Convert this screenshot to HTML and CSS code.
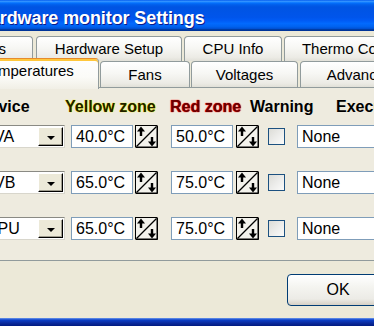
FILE: index.html
```html
<!DOCTYPE html>
<html>
<head>
<meta charset="utf-8">
<link rel="stylesheet" href="styles.css">
</head>
<body>
<div class="window">
  <div class="titlebar"><span class="title">Hardware monitor Settings</span></div>
  <div class="client">
    <div class="tabrow tabrow-top">
      <div class="tab tab-a">Options</div>
      <div class="tab tab-b">Hardware Setup</div>
      <div class="tab tab-c">CPU Info</div>
      <div class="tab tab-d">Thermo Control</div>
    </div>
    <div class="tabrow tabrow-bottom">
      <div class="tab tab-sel tab-e">Temperatures</div>
      <div class="tab tab-f">Fans</div>
      <div class="tab tab-g">Voltages</div>
      <div class="tab tab-h">Advanced</div>
    </div>
    <div class="panel">
      <div class="head">
        <span class="h-device">Device</span>
        <span class="h-yellow">Yellow zone</span>
        <span class="h-red">Red zone</span>
        <span class="h-warn">Warning</span>
        <span class="h-exec">Execute</span>
      </div>
      <div class="rows">
        <div class="row">
          <div class="combo"><span class="combo-text">VA</span><span class="combo-btn"><i class="tri"></i></span></div>
          <div class="field t1">40.0°C</div>
          <svg class="spin" width="23" height="23" viewBox="0 0 23 23"><rect x="0.5" y="0.5" width="21.5" height="21.5" fill="#F3F2EC" stroke="#000"/><path d="M22.5 1 V22.5 H1" fill="none" stroke="#000"/><line x1="1.5" y1="21.5" x2="21.5" y2="1.5" stroke="#000" stroke-width="1.2"/><path d="M6 1.5 L2 6.5 H10 Z"/><rect x="4.8" y="6" width="2.4" height="5"/><rect x="15.8" y="12" width="2.4" height="5"/><path d="M17 21.5 L13 16.5 H21 Z"/></svg>
          <div class="field t2">50.0°C</div>
          <svg class="spin s2" width="23" height="23" viewBox="0 0 23 23"><rect x="0.5" y="0.5" width="21.5" height="21.5" fill="#F3F2EC" stroke="#000"/><path d="M22.5 1 V22.5 H1" fill="none" stroke="#000"/><line x1="1.5" y1="21.5" x2="21.5" y2="1.5" stroke="#000" stroke-width="1.2"/><path d="M6 1.5 L2 6.5 H10 Z"/><rect x="4.8" y="6" width="2.4" height="5"/><rect x="15.8" y="12" width="2.4" height="5"/><path d="M17 21.5 L13 16.5 H21 Z"/></svg>
          <div class="check"></div>
          <div class="field none">None</div>
        </div>
        <div class="row">
          <div class="combo"><span class="combo-text">VB</span><span class="combo-btn"><i class="tri"></i></span></div>
          <div class="field t1">65.0°C</div>
          <svg class="spin" width="23" height="23" viewBox="0 0 23 23"><rect x="0.5" y="0.5" width="21.5" height="21.5" fill="#F3F2EC" stroke="#000"/><path d="M22.5 1 V22.5 H1" fill="none" stroke="#000"/><line x1="1.5" y1="21.5" x2="21.5" y2="1.5" stroke="#000" stroke-width="1.2"/><path d="M6 1.5 L2 6.5 H10 Z"/><rect x="4.8" y="6" width="2.4" height="5"/><rect x="15.8" y="12" width="2.4" height="5"/><path d="M17 21.5 L13 16.5 H21 Z"/></svg>
          <div class="field t2">75.0°C</div>
          <svg class="spin s2" width="23" height="23" viewBox="0 0 23 23"><rect x="0.5" y="0.5" width="21.5" height="21.5" fill="#F3F2EC" stroke="#000"/><path d="M22.5 1 V22.5 H1" fill="none" stroke="#000"/><line x1="1.5" y1="21.5" x2="21.5" y2="1.5" stroke="#000" stroke-width="1.2"/><path d="M6 1.5 L2 6.5 H10 Z"/><rect x="4.8" y="6" width="2.4" height="5"/><rect x="15.8" y="12" width="2.4" height="5"/><path d="M17 21.5 L13 16.5 H21 Z"/></svg>
          <div class="check"></div>
          <div class="field none">None</div>
        </div>
        <div class="row">
          <div class="combo"><span class="combo-text combo-text-cpu">CPU</span><span class="combo-btn"><i class="tri"></i></span></div>
          <div class="field t1">65.0°C</div>
          <svg class="spin" width="23" height="23" viewBox="0 0 23 23"><rect x="0.5" y="0.5" width="21.5" height="21.5" fill="#F3F2EC" stroke="#000"/><path d="M22.5 1 V22.5 H1" fill="none" stroke="#000"/><line x1="1.5" y1="21.5" x2="21.5" y2="1.5" stroke="#000" stroke-width="1.2"/><path d="M6 1.5 L2 6.5 H10 Z"/><rect x="4.8" y="6" width="2.4" height="5"/><rect x="15.8" y="12" width="2.4" height="5"/><path d="M17 21.5 L13 16.5 H21 Z"/></svg>
          <div class="field t2">75.0°C</div>
          <svg class="spin s2" width="23" height="23" viewBox="0 0 23 23"><rect x="0.5" y="0.5" width="21.5" height="21.5" fill="#F3F2EC" stroke="#000"/><path d="M22.5 1 V22.5 H1" fill="none" stroke="#000"/><line x1="1.5" y1="21.5" x2="21.5" y2="1.5" stroke="#000" stroke-width="1.2"/><path d="M6 1.5 L2 6.5 H10 Z"/><rect x="4.8" y="6" width="2.4" height="5"/><rect x="15.8" y="12" width="2.4" height="5"/><path d="M17 21.5 L13 16.5 H21 Z"/></svg>
          <div class="check"></div>
          <div class="field none">None</div>
        </div>
      </div>
    </div>
    <div class="footer"><button class="btn">OK</button></div>
  </div>
  <div class="frame-bottom"></div>
</div>
</body>
</html>
```
FILE: styles.css
```css
html, body {
  margin: 0;
  padding: 0;
}
body {
  width: 374px;
  height: 326px;
  overflow: hidden;
  background: #ECE9D8;
  font-family: "Liberation Sans", Arial, sans-serif;
  color: #000;
}
.window {
  width: 374px;
  display: flex;
  flex-direction: column;
}
.titlebar {
  box-sizing: border-box;
  height: 31px;
  padding-top: 7px;
  line-height: 22px;
  white-space: nowrap;
  overflow: hidden;
  background: linear-gradient(to bottom, #0058ee 0%, #3593ff 4%, #288eff 6%, #127dff 8%, #036ffc 10%, #0262ee 14%, #0057e5 20%, #0054e3 24%, #0055eb 56%, #005bf5 66%, #026afe 76%, #0062ef 86%, #0052d6 92%, #0040ab 94%, #003092 100%);
}
.title {
  display: inline-block;
  margin-left: -23px;
  color: #fff;
  font-weight: bold;
  font-size: 18px;
  letter-spacing: -0.1px;
  text-shadow: 1px 1px 0 #0a1a8a;
}
.client {
  display: flex;
  flex-direction: column;
  padding-top: 5px;
  background: #ECE9D8;
}
.tabrow {
  display: flex;
  white-space: nowrap;
  font-size: 15px;
}
.tabrow-top {
  height: 25px;
  margin-left: -67px;
  align-items: flex-start;
}
.tabrow-bottom {
  height: 29px;
  margin-top: -3px;
  margin-left: -43px;
  align-items: flex-end;
}
.tab {
  flex: none;
  box-sizing: border-box;
  border: 1px solid #919B9C;
  border-bottom: none;
  border-radius: 4px 4px 0 0;
  background: linear-gradient(to bottom, #ffffff 0%, #f7f7f4 45%, #ecebe5 85%, #e1e0d8 100%);
  text-align: center;
}
.tabrow-top .tab {
  height: 25px;
  line-height: 24px;
}
.tabrow-bottom .tab {
  height: 26px;
  line-height: 26px;
}
.tab-a {
  width: 100px;
  margin-right: 3px;
  text-align: right;
  padding-right: 26px;
}
.tab-b { width: 146px; margin-right: 2px; }
.tab-c { width: 98px; margin-right: 2px; }
.tab-d { width: 140px; }
.tab-e { width: 142px; margin-right: 1px; }
.tab-f { width: 90px; margin-right: 1px; }
.tab-g { width: 107px; margin-right: 2px; }
.tab-h { width: 120px; }
.tabrow-bottom .tab-sel {
  position: relative;
  z-index: 1;
  height: 31px;
  margin-bottom: -2px;
  line-height: 24px;
  border-top: 1px solid #E68B2C;
  box-shadow: inset 0 2px 0 #FFC73C;
  background: linear-gradient(to bottom, #fefefe 0%, #fbfbf8 60%, #f1efe6 100%);
}
.panel {
  box-sizing: border-box;
  height: 174px;
  border-top: 1px solid #919B9C;
  border-bottom: 1px solid #919B9C;
  background: #EEEBDF;
  padding-top: 9px;
  display: flex;
  flex-direction: column;
}
.head {
  display: flex;
  height: 20px;
  line-height: 20px;
  margin-left: -22px;
  font-weight: bold;
  font-size: 16px;
  white-space: nowrap;
}
.head span { flex: none; }
.h-device { width: 87px; }
.h-yellow {
  width: 105px;
  color: #202000;
  text-shadow: 0 0 1px #ffff00, 0 0 1px #ffff00;
}
.h-red {
  width: 80px;
  color: #6a0000;
  text-shadow: 0 0 1px #ff0000, 0 0 1px #ff2020;
}
.h-warn { width: 86px; }
.rows {
  display: flex;
  flex-direction: column;
  gap: 23px;
  margin-top: 8px;
}
.row {
  display: flex;
  align-items: center;
  height: 23px;
  font-size: 16px;
  white-space: nowrap;
}
.row > * { flex: none; }
.combo {
  box-sizing: border-box;
  width: 101px;
  height: 23px;
  margin-left: -36px;
  border: 1px solid #8a8a84;
  border-right-color: #d8d6cc;
  border-bottom-color: #d8d6cc;
  background: #fff;
  display: flex;
  align-items: center;
  justify-content: space-between;
  padding-right: 1px;
}
.combo-text {
  padding-left: 29px;
  line-height: 21px;
}
.combo-text-cpu {
  padding-left: 21px;
}
.combo-btn {
  box-sizing: border-box;
  width: 25px;
  height: 19px;
  background: #ECE9D8;
  border-top: 1px solid #fff;
  border-left: 1px solid #fff;
  border-right: 1px solid #000;
  border-bottom: 1px solid #000;
  box-shadow: inset -1px -1px 0 #a09d8f;
  display: flex;
  align-items: center;
  justify-content: center;
  padding-top: 2px;
}
.tri {
  display: block;
  width: 0;
  height: 0;
  border-left: 4px solid transparent;
  border-right: 4px solid transparent;
  border-top: 4px solid #000;
}
.field {
  box-sizing: border-box;
  height: 23px;
  line-height: 21px;
  border: 1px solid #7F9DB9;
  background: #fff;
  padding-left: 4px;
}
.t1 { width: 62px; margin-left: 6px; }
.spin { display: block; margin-left: 2px; }
.t2 { width: 62px; margin-left: 13px; }
.s2 { margin-left: 3px; }
.check {
  box-sizing: border-box;
  width: 17px;
  height: 17px;
  margin-left: 9px;
  border: 1px solid #1C5180;
  background: linear-gradient(135deg, #dcdcd7 0%, #ececea 50%, #fbfbfa 100%);
}
.none {
  width: 160px;
  margin-left: 12px;
}
.footer {
  box-sizing: border-box;
  height: 57px;
  padding-top: 13px;
  padding-left: 287px;
  background: #ECE9D8;
  white-space: nowrap;
}
.btn {
  box-sizing: border-box;
  width: 102px;
  height: 32px;
  border: 1px solid #003C74;
  border-radius: 4px;
  background: linear-gradient(to bottom, #ffffff 0%, #f4f4f0 40%, #ecebe6 80%, #d6d0c5 100%);
  font-family: "Liberation Sans", Arial, sans-serif;
  font-size: 16px;
  color: #000;
  padding: 0;
  margin: 0;
}
.frame-bottom {
  height: 8px;
  background: linear-gradient(to bottom, #6e98ea 0px, #3b6ddc 1px, #0b3fc8 2px, #0a2a9e 5px, #001a80 8px);
}
```
